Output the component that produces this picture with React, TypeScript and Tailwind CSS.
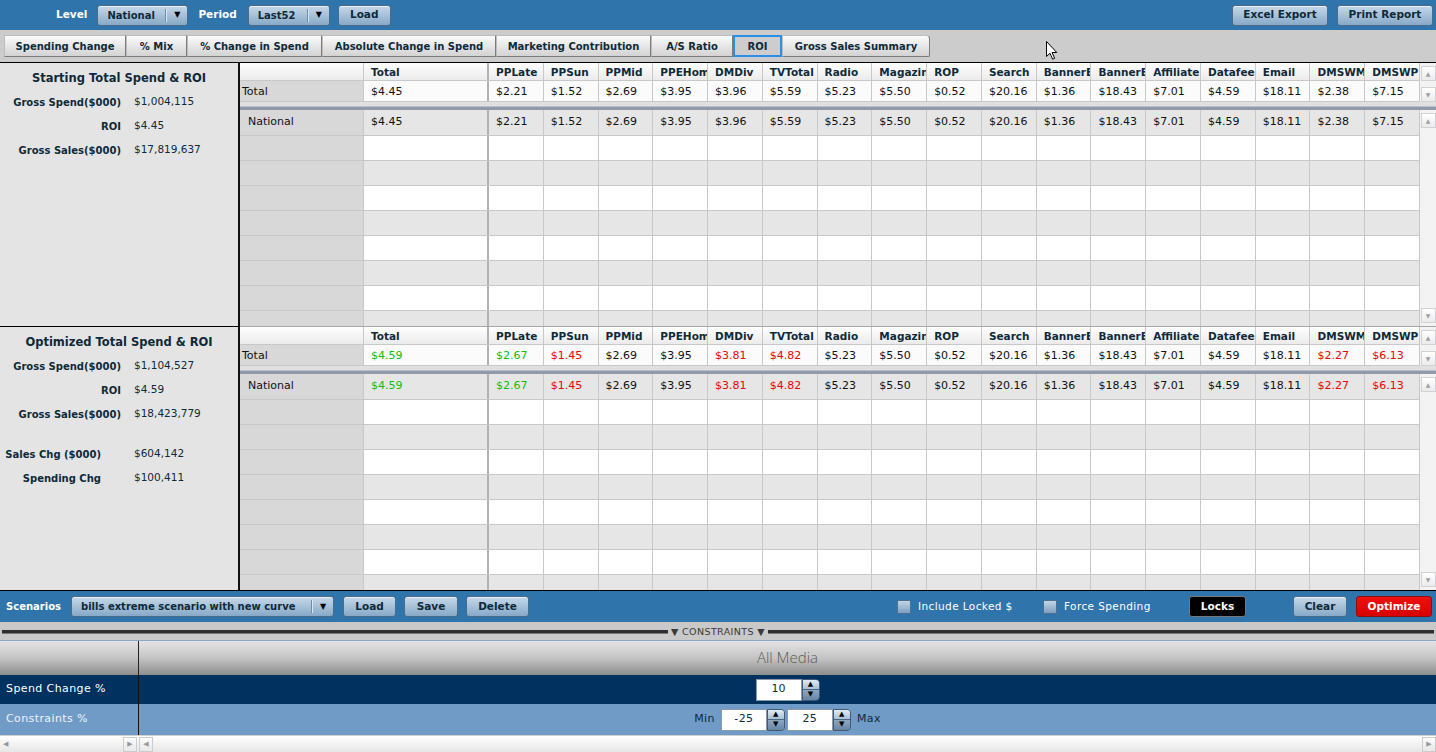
import React from 'react';

type V = { v: string; c?: string };

const HEADS = ['Total', 'PPLate', 'PPSun', 'PPMid', 'PPEHome', 'DMDiv', 'TVTotal', 'Radio', 'Magazine', 'ROP', 'Search', 'BannerExchange', 'BannerExt', 'Affiliate', 'Datafeed', 'Email', 'DMSWM', 'DMSWP'];

const G = 'text-[#0bbf0b]';
const R = 'text-[#f00000]';

const START: V[] = ['$4.45', '$2.21', '$1.52', '$2.69', '$3.95', '$3.96', '$5.59', '$5.23', '$5.50', '$0.52', '$20.16', '$1.36', '$18.43', '$7.01', '$4.59', '$18.11', '$2.38', '$7.15'].map((v) => ({ v }));

const OPT: V[] = [
  { v: '$4.59', c: G }, { v: '$2.67', c: G }, { v: '$1.45', c: R }, { v: '$2.69' }, { v: '$3.95' }, { v: '$3.81', c: R },
  { v: '$4.82', c: R }, { v: '$5.23' }, { v: '$5.50' }, { v: '$0.52' }, { v: '$20.16' }, { v: '$1.36' }, { v: '$18.43' },
  { v: '$7.01' }, { v: '$4.59' }, { v: '$18.11' }, { v: '$2.27', c: R }, { v: '$6.13', c: R },
];

const EMPTY: V[] = HEADS.map(() => ({ v: '' }));

const TABS: [string, string][] = [
  ['Spending Change', 'w-[122px]'],
  ['% Mix', 'w-[61px]'],
  ['% Change in Spend', 'w-[135px]'],
  ['Absolute Change in Spend', 'w-[174px]'],
  ['Marketing Contribution', 'w-[155px]'],
  ['A/S Ratio', 'w-[82px]'],
  ['ROI', 'w-[49px]'],
  ['Gross Sales Summary', 'w-[148px]'],
];

function Btn({ children, w, className = '' }: { children: React.ReactNode; w: string; className?: string }) {
  return (
    <div
      className={`h-[21px] shrink-0 flex items-center justify-center rounded-[3px] border border-[#4a6c8a] bg-linear-to-b from-[#c6d8e9] to-[#87a9c7] text-[10.5px] font-bold text-[#0f2a3a] shadow-[inset_0_1px_0_rgba(255,255,255,0.6)] ${w} ${className}`}
    >
      {children}
    </div>
  );
}

function Select({ label, w }: { label: string; w: string }) {
  return (
    <div className={`h-[21px] shrink-0 flex items-center rounded-[3px] border border-[#4a6c8a] bg-linear-to-b from-[#c6d8e9] to-[#87a9c7] shadow-[inset_0_1px_0_rgba(255,255,255,0.6)] ${w}`}>
      <span className="flex-1 min-w-0 pl-[9px] overflow-hidden whitespace-nowrap text-[10px] font-bold text-[#0f2a3a]">{label}</span>
      <span className="w-[2px] h-[13px] border-l border-[#6f8ca6] border-r border-r-[#dce7f1]" />
      <span className="w-[20px] text-center text-[8px] leading-none text-black">▼</span>
    </div>
  );
}

function Arrow({ d }: { d: 'up' | 'down' }) {
  return (
    <div className="h-[15px] w-[15px] flex items-center justify-center bg-linear-to-b from-white to-[#ebebeb] border border-[#d2d2d2] text-[6px] leading-none text-[#a0a0a0]">
      {d === 'up' ? '▲' : '▼'}
    </div>
  );
}

function ScrollCol({ h, pad }: { h: string; pad: string }) {
  return (
    <div className={`w-[16px] shrink-0 flex flex-col justify-between items-center bg-[#f3f3f3] ${h} ${pad}`}>
      <Arrow d="up" />
      <Arrow d="down" />
    </div>
  );
}

function Row({
  h,
  label,
  labelPad = 'pl-[2px]',
  vals,
  dataBg,
  header = false,
  top = false,
}: {
  h: string;
  label: string;
  labelPad?: string;
  vals: V[];
  dataBg: string;
  header?: boolean;
  top?: boolean;
}) {
  const text = header ? 'font-bold text-[10.5px] text-[#0f2a3a]' : 'text-[#111]';
  const align = top ? 'items-start pt-[3px]' : header ? 'items-center pt-[2px]' : 'items-center';
  return (
    <div className={`flex shrink-0 border-b border-[#c8c8c8] text-[11px] ${h} ${header ? 'bg-linear-to-b from-white to-[#ebebeb]' : ''}`}>
      <div className={`w-[124px] shrink-0 flex ${align} ${labelPad} border-r border-[#c8c8c8] ${header ? '' : 'bg-[#d8d8d8]'} text-[#111]`}>
        {label}
      </div>
      {vals.map((x, i) => (
        <div
          key={i}
          className={`${i === 0 ? 'w-[125px] shrink-0 border-r-2 border-r-[#b2b2b2]' : 'flex-1 min-w-0 border-r border-[#c8c8c8]'} flex ${align} pl-[7px] overflow-hidden whitespace-nowrap ${header ? '' : dataBg} ${x.c ?? text}`}
        >
          {header ? HEADS[i] : x.v}
        </div>
      ))}
    </div>
  );
}

function GridSection({ vals }: { vals: V[] }) {
  const body = [0, 1, 2, 3, 4, 5, 6, 7];
  return (
    <div className="h-[263px] flex flex-col overflow-hidden">
      <div className="flex shrink-0">
        <div className="w-[1180px] flex flex-col">
          <Row h="h-[18px]" label="" vals={EMPTY} dataBg="" header />
          <Row h="h-[21px]" label="Total" vals={vals} dataBg="bg-[#fbfbfb]" top />
        </div>
        <ScrollCol h="h-[39px]" pad="pt-[3px] pb-0" />
      </div>
      <div className="h-[4px] shrink-0 bg-[#e0e0e0]" />
      <div className="h-[4px] shrink-0 bg-[#8f9ca8] border-t border-[#b7c1ca]" />
      <div className="flex flex-1 min-h-0">
        <div className="w-[1180px] flex flex-col overflow-hidden">
          <Row h="h-[26px]" label="National" labelPad="pl-[8px]" vals={vals} dataBg="bg-[#e6e6e6]" />
          {body.map((i) => (
            <Row key={i} h="h-[25px]" label="" vals={EMPTY} dataBg={i % 2 === 0 ? 'bg-white' : 'bg-[#e6e6e6]'} />
          ))}
        </div>
        <ScrollCol h="h-full" pad="py-[3px]" />
      </div>
    </div>
  );
}

function Stat({ label, value, lw = 'w-[121px]', gap = 'ml-[13px]' }: { label: string; value: string; lw?: string; gap?: string }) {
  return (
    <div className="h-[24px] flex items-center">
      <span className={`${lw} shrink-0 text-right text-[10px] font-bold text-[#0f2a3a] whitespace-nowrap`}>{label}</span>
      <span className={`${gap} text-[10.5px] text-[#0f2a3a]`}>{value}</span>
    </div>
  );
}

function Spin({ value }: { value: string }) {
  return (
    <div className="flex h-[22px]">
      <div className="w-[46px] bg-white border border-[#8a9aaa] flex items-center justify-center text-[11px] text-[#0f2a3a]">{value}</div>
      <div className="w-[18px] flex flex-col rounded-r-[4px] overflow-hidden border border-[#3f5a76]">
        <div className="flex-1 flex items-center justify-center bg-linear-to-b from-[#e2ebf3] to-[#a9bfd4] text-[7px] leading-none text-black">▲</div>
        <div className="flex-1 flex items-center justify-center bg-linear-to-b from-[#8ea8c2] to-[#6885a4] text-[7px] leading-none text-black border-t border-[#4a6684]">▼</div>
      </div>
    </div>
  );
}

function Check({ label, w }: { label: string; w: string }) {
  return (
    <div className={`flex items-center shrink-0 ${w}`}>
      <div className="w-[14px] h-[14px] border border-[#4f6f8f] bg-linear-to-b from-[#c3d5e6] to-[#7d9ec0]" />
      <span className="ml-[7px] text-[10.5px] text-white tracking-[0.4px]">{label}</span>
    </div>
  );
}

export default function App() {
  return (
    <div className="relative w-[1436px] h-[752px] overflow-hidden bg-[#cccccc] font-['DejaVu_Sans',sans-serif] select-none">
      {/* top bar */}
      <div className="h-[30px] flex items-center bg-[#2f74ab] pl-[56px] pr-[3px]">
        <span className="text-[10.5px] font-bold text-white">Level</span>
        <Select label="National" w="w-[91px] ml-[10px]" />
        <span className="ml-[10px] text-[10.5px] font-bold text-white">Period</span>
        <Select label="Last52" w="w-[82px] ml-[11px]" />
        <Btn w="w-[53px]" className="ml-[8px]">Load</Btn>
        <div className="flex-1" />
        <Btn w="w-[96px]">Excel Export</Btn>
        <Btn w="w-[96px]" className="ml-[9px]">Print Report</Btn>
      </div>

      {/* tabs */}
      <div className="h-[32px] flex items-start pl-[4px] pt-[5px] bg-[#cccccc]">
        {TABS.map(([t, w], i) => {
          const sel = t === 'ROI';
          return (
            <div
              key={t}
              className={`h-[22px] shrink-0 flex items-center justify-center text-[10px] font-bold text-[#0f2a3a] whitespace-nowrap ${w} ${
                sel
                  ? 'bg-[#cdcdcd] border-2 border-[#2a8fe6]'
                  : 'bg-linear-to-b from-[#fbfbfb] to-[#d3d3d3] border border-[#bdbdbd] border-r-[#7c7c7c] border-b-[#7c7c7c]'
              } ${i === TABS.length - 1 ? 'rounded-tr-[4px] rounded-br-[2px]' : ''}`}
            >
              {t}
            </div>
          );
        })}
      </div>

      {/* main */}
      <div className="h-px bg-black" />
      <div className="flex h-[527px]">
        <div className="w-[238px] shrink-0 flex flex-col bg-[#e4e4e4]">
          <div className="h-[263px]">
            <div className="h-[27px] flex items-center justify-center pt-[4px] text-[11.5px] font-bold text-[#0f2a3a]">Starting Total Spend &amp; ROI</div>
            <Stat label="Gross Spend($000)" value="$1,004,115" />
            <Stat label="ROI" value="$4.45" />
            <Stat label="Gross Sales($000)" value="$17,819,637" />
          </div>
          <div className="h-px bg-black" />
          <div className="h-[263px]">
            <div className="h-[27px] flex items-center justify-center pt-[4px] text-[11.5px] font-bold text-[#0f2a3a]">Optimized Total Spend &amp; ROI</div>
            <Stat label="Gross Spend($000)" value="$1,104,527" />
            <Stat label="ROI" value="$4.59" />
            <Stat label="Gross Sales($000)" value="$18,423,779" />
            <div className="h-[16px]" />
            <Stat label="Sales Chg ($000)" value="$604,142" lw="w-[101px]" gap="ml-[33px]" />
            <Stat label="Spending Chg" value="$100,411" lw="w-[101px]" gap="ml-[33px]" />
          </div>
        </div>
        <div className="w-[2px] shrink-0 bg-[#111]" />
        <div className="flex-1 flex flex-col bg-[#f3f3f3]">
          <GridSection vals={START} />
          <div className="h-px bg-[#a8a8a8]" />
          <GridSection vals={OPT} />
        </div>
      </div>
      <div className="h-px bg-black" />

      {/* scenarios bar */}
      <div className="h-[31px] flex items-center bg-[#2f74ab] pl-[6px]">
        <span className="w-[65px] shrink-0 text-[10px] font-bold text-white">Scenarios</span>
        <Select label="bills extreme scenario with new curve" w="w-[263px]" />
        <Btn w="w-[53px]" className="ml-[9px]">Load</Btn>
        <Btn w="w-[54px]" className="ml-[8px]">Save</Btn>
        <Btn w="w-[63px]" className="ml-[8px]">Delete</Btn>
        <div className="w-[368px] shrink-0" />
        <Check label="Include Locked $" w="w-[146px]" />
        <Check label="Force Spending" w="w-[146px]" />
        <div className="h-[21px] w-[57px] shrink-0 flex items-center justify-center rounded-[3px] border border-[#777] bg-black text-[10.5px] font-bold text-white">Locks</div>
        <Btn w="w-[54px]" className="ml-[47px]">Clear</Btn>
        <div className="ml-[9px] h-[21px] w-[76px] shrink-0 flex items-center justify-center rounded-[3px] border border-[#8a1010] bg-linear-to-b from-[#f01010] to-[#d80000] text-[10.5px] font-bold text-white">Optimize</div>
      </div>

      {/* constraints divider */}
      <div className="h-[18px] flex items-center px-[2px] pt-[2px] bg-[#c9c9c9]">
        <div className="flex-1 h-[4px] bg-[#2e2e2e] border-b border-[#777]" />
        <span className="px-[3px] text-[9.5px] leading-none text-[#3a3a3a] tracking-[0.4px]">▼ CONSTRAINTS ▼</span>
        <div className="flex-1 h-[4px] bg-[#2e2e2e] border-b border-[#777]" />
      </div>
      <div className="h-px bg-[#88a9c8]" />

      {/* constraints table */}
      <div className="flex h-[34px] bg-linear-to-b from-[#e4e4e4] via-[#c4c4c4] to-[#8e8e8e]">
        <div className="w-[139px] shrink-0 border-r border-[#222]" />
        <div className="flex-1 flex items-center justify-center pb-[2px] font-['Open_Sans',sans-serif] font-light text-[15px] text-[#5c5c5c]">All Media</div>
      </div>
      <div className="flex h-[29px] bg-[#00315f]">
        <div className="w-[139px] shrink-0 flex items-center pl-[6px] border-r border-[#111] text-[11px] text-white tracking-[0.4px]">Spend Change %</div>
        <div className="flex-1 flex items-center justify-center">
          <Spin value="10" />
        </div>
      </div>
      <div className="flex h-[31px] bg-[#6f9bc6]">
        <div className="w-[139px] shrink-0 flex items-center pl-[6px] border-r border-[#111] text-[11px] text-[#eef3f8] tracking-[0.4px]">Constraints %</div>
        <div className="flex-1 flex items-center justify-center text-[11px] text-[#0f2a3a] tracking-[0.4px]">
          <span className="mr-[6px]">Min</span>
          <Spin value="-25" />
          <div className="w-[2px]" />
          <Spin value="25" />
          <span className="ml-[6px]">Max</span>
        </div>
      </div>
      <div className="flex h-[17px] bg-linear-to-b from-white to-[#e6e6e6] border-t border-[#d0d0d0]">
        <div className="w-[139px] shrink-0 flex items-center justify-between pl-[3px] pr-[2px]">
          <span className="text-[7px] text-[#999]">◀</span>
          <span className="w-[14px] h-[15px] flex items-center justify-center border border-[#ccc] text-[7px] text-[#999]">▶</span>
        </div>
        <div className="flex-1 flex items-center justify-between">
          <span className="w-[14px] h-[15px] flex items-center justify-center border border-[#ccc] text-[7px] text-[#999]">◀</span>
          <span className="w-[14px] h-[15px] flex items-center justify-center border border-[#ccc] text-[7px] text-[#999]">▶</span>
        </div>
      </div>

      {/* mouse pointer */}
      <svg className="absolute left-[1046px] top-[41px]" width="12" height="19" viewBox="0 0 12 19">
        <path d="M0.5 0.5 L0.5 15.5 L4 12.2 L6.6 18.2 L8.6 17.3 L6.1 11.5 L10.8 11.5 Z" fill="white" stroke="black" strokeWidth="1" />
      </svg>
    </div>
  );
}
